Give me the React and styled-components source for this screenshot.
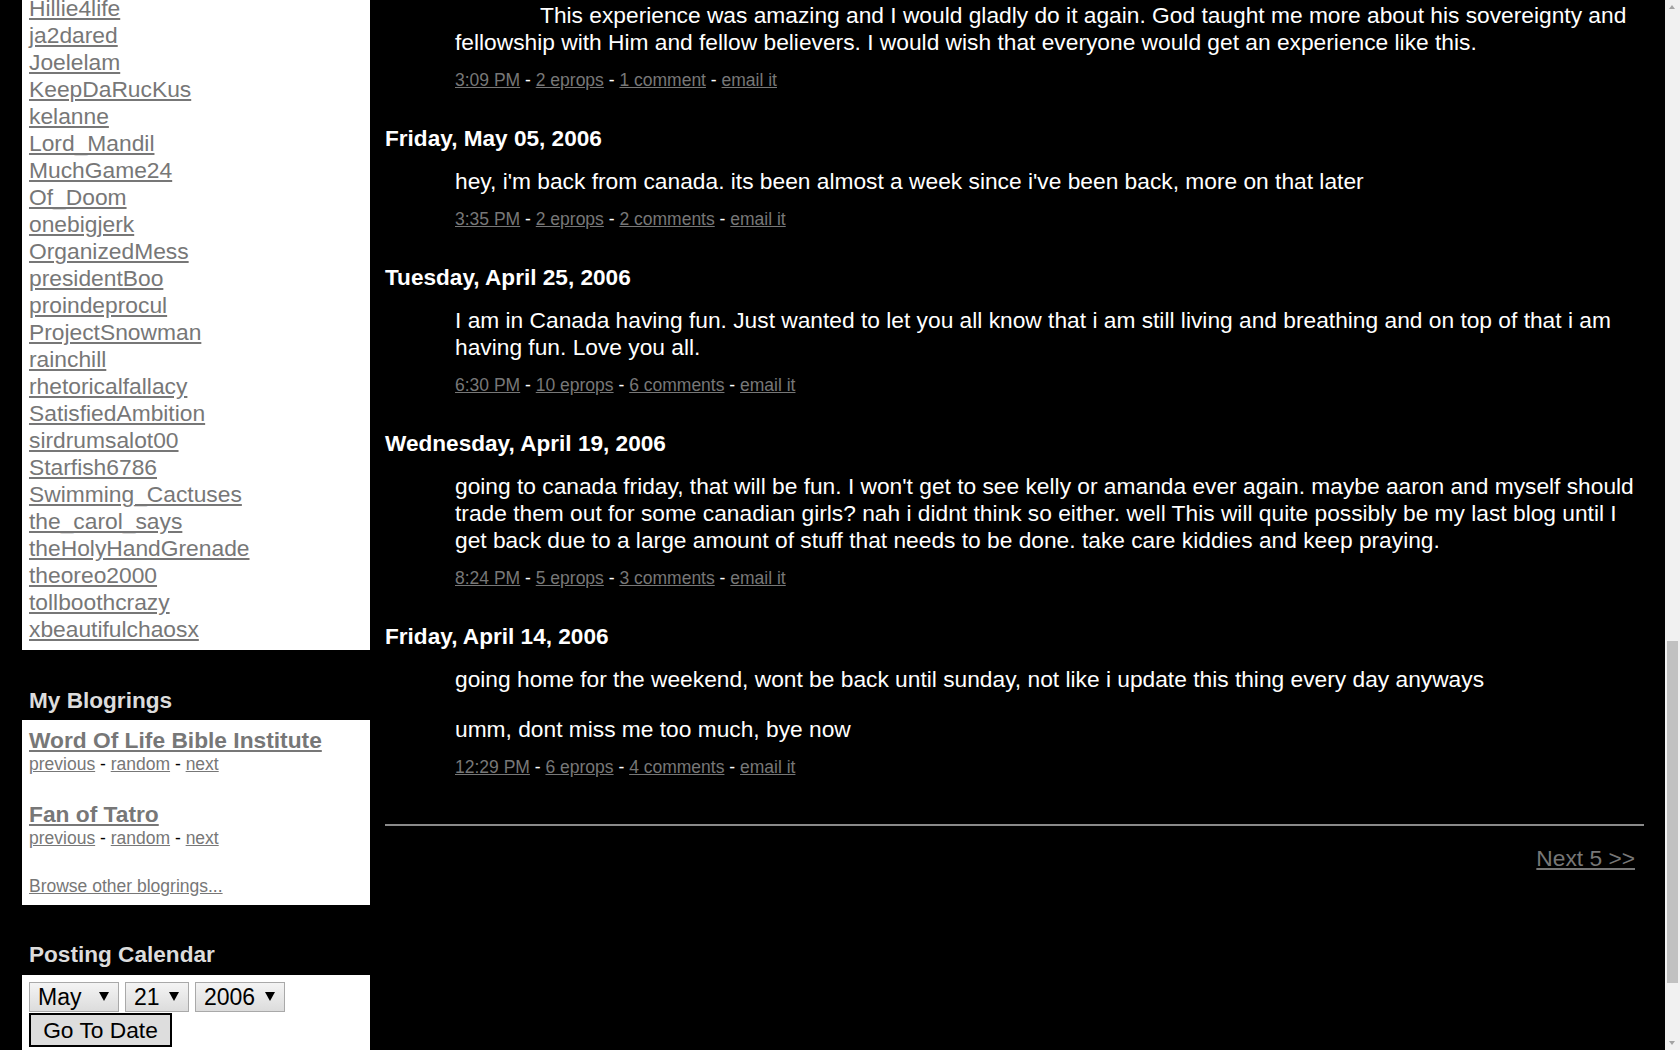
import React, { useLayoutEffect, useState } from "react";
import styled, { createGlobalStyle } from "styled-components";

// the screenshot shows the page scrolled down near its end
const SCROLL_TOP = 1922;
const BAR = 15;

const friends = [
  "Hillie4life", "ja2dared", "Joelelam", "KeepDaRucKus", "kelanne", "Lord_Mandil",
  "MuchGame24", "Of_Doom", "onebigjerk", "OrganizedMess", "presidentBoo", "proindeprocul",
  "ProjectSnowman", "rainchill", "rhetoricalfallacy", "SatisfiedAmbition", "sirdrumsalot00",
  "Starfish6786", "Swimming_Cactuses", "the_carol_says", "theHolyHandGrenade", "theoreo2000",
  "tollboothcrazy", "xbeautifulchaosx",
];

const blogrings = ["Word Of Life Bible Institute", "Fan of Tatro"];

const posts = [
  {
    date: null,
    indent: true,
    paragraphs: [
      "This experience was amazing and I would gladly do it again. God taught me more about his sovereignty and fellowship with Him and fellow believers. I would wish that everyone would get an experience like this.",
    ],
    time: "3:09 PM", eprops: "2 eprops", comments: "1 comment",
  },
  {
    date: "Friday, May 05, 2006",
    paragraphs: [
      "hey, i'm back from canada. its been almost a week since i've been back, more on that later",
    ],
    time: "3:35 PM", eprops: "2 eprops", comments: "2 comments",
  },
  {
    date: "Tuesday, April 25, 2006",
    paragraphs: [
      "I am in Canada having fun. Just wanted to let you all know that i am still living and breathing and on top of that i am having fun. Love you all.",
    ],
    time: "6:30 PM", eprops: "10 eprops", comments: "6 comments",
  },
  {
    date: "Wednesday, April 19, 2006",
    paragraphs: [
      "going to canada friday, that will be fun. I won't get to see kelly or amanda ever again. maybe aaron and myself should trade them out for some canadian girls? nah i didnt think so either. well This will quite possibly be my last blog until I get back due to a large amount of stuff that needs to be done. take care kiddies and keep praying.",
    ],
    time: "8:24 PM", eprops: "5 eprops", comments: "3 comments",
  },
  {
    date: "Friday, April 14, 2006",
    paragraphs: [
      "going home for the weekend, wont be back until sunday, not like i update this thing every day anyways",
      "umm, dont miss me too much, bye now",
    ],
    time: "12:29 PM", eprops: "6 eprops", comments: "4 comments",
  },
];

const months = ["January", "February", "March", "April", "May", "June", "July",
  "August", "September", "October", "November", "December"];
const days = Array.from({ length: 31 }, (_, i) => String(i + 1));
const years = ["2004", "2005", "2006"];

// classic scrollbar drawn over the right edge (the headless window hides its own)
const ScrollBar = ({ scrollTop }) => {
  const [thumb, setThumb] = useState({ top: 641, height: 342 });

  useLayoutEffect(() => {
    window.scrollTo(0, scrollTop);
    const total = document.documentElement.scrollHeight;
    const track = window.innerHeight - BAR * 2;
    setThumb({
      top: BAR + (window.scrollY / total) * track,
      height: (window.innerHeight / total) * track,
    });
  }, [scrollTop]);

  return (
    <Track>
      <Arrow $up />
      <Thumb style={{ top: thumb.top, height: thumb.height }} />
      <Arrow />
    </Track>
  );
};

const App = () => {
  return (
    <>
      <GlobalStyle />
      <Page>
        <Sidebar>
          <FriendsBox>
            <FriendList>
              {friends.map(name => (
                <li key={name}><Link href="#">{name}</Link></li>
              ))}
            </FriendList>
          </FriendsBox>

          <SideTitle>My Blogrings</SideTitle>
          <RingsBox>
            {blogrings.map(name => (
              <Ring key={name}>
                <RingName href="#">{name}</RingName>
                <SmallLine>
                  <Link href="#">previous</Link> - <Link href="#">random</Link> - <Link href="#">next</Link>
                </SmallLine>
              </Ring>
            ))}
            <SmallLine><Link href="#">Browse other blogrings...</Link></SmallLine>
          </RingsBox>

          <SideTitle>Posting Calendar</SideTitle>
          <CalendarBox>
            <SelectRow>
              <SelectWrap>
                <Select $w={90} defaultValue="May">
                  {months.map(m => <option key={m} value={m}>{m}</option>)}
                </Select>
              </SelectWrap>
              <SelectWrap>
                <Select $w={64} defaultValue="21">
                  {days.map(d => <option key={d} value={d}>{d}</option>)}
                </Select>
              </SelectWrap>
              <SelectWrap>
                <Select $w={90} defaultValue="2006">
                  {years.map(y => <option key={y} value={y}>{y}</option>)}
                </Select>
              </SelectWrap>
            </SelectRow>
            <GoButton type="button">Go To Date</GoButton>
          </CalendarBox>
        </Sidebar>

        <Main>
          {posts.map((post, i) => (
            <Post key={i}>
              {post.date && <DateTitle>{post.date}</DateTitle>}
              <PostBody>
                {post.paragraphs.map((text, j) => (
                  <Paragraph key={j} $indent={post.indent && j === 0}>{text}</Paragraph>
                ))}
                <Meta>
                  <Link href="#">{post.time}</Link> - <Link href="#">{post.eprops}</Link> - <Link href="#">{post.comments}</Link> - <Link href="#">email it</Link>
                </Meta>
              </PostBody>
            </Post>
          ))}
          <Rule />
          <Pager><Link href="#">Next 5 &gt;&gt;</Link></Pager>
        </Main>
      </Page>
      <ScrollBar scrollTop={SCROLL_TOP} />
    </>
  );
};


/**
 *  STYLES
 */
const GlobalStyle = createGlobalStyle`
  html {
    background: #000;
  }
  body {
    margin: 0;
    background: #000;
    color: #fff;
    font-family: Arial, "Liberation Sans", sans-serif;
    font-size: 22.75px;
    line-height: 27px;
  }
`;

const Page = styled.div`
  display: flex;
  align-items: flex-start;
  gap: 15px;
  padding: ${SCROLL_TOP - 40}px ${21 + BAR}px 0 22px;
`;

const Sidebar = styled.aside`
  flex: 0 0 348px;
  display: flex;
  flex-direction: column;
`;

const WhiteBox = styled.div`
  background: #fff;
  color: #000;
  padding: 0 7px;
  box-sizing: border-box;
`;

const FriendsBox = styled(WhiteBox)`
  padding-top: 34.5px;
  padding-bottom: 7.5px;
`;

const FriendList = styled.ul`
  list-style: none;
  margin: 0;
  padding: 0;
  line-height: 27px;
  font-size: 22.8px;
`;

const Link = styled.a`
  color: #777;
  text-decoration: underline;
`;

const SideTitle = styled.h3`
  margin: 36.5px 0 6.5px;
  padding-left: 7px;
  font-size: 22.6px;
  line-height: 27px;
  font-weight: bold;
  color: #dcdcdc;
`;

const RingsBox = styled(WhiteBox)`
  padding-top: 6.5px;
  padding-bottom: 9px;
`;

const Ring = styled.div`
  margin-bottom: 27.5px;
`;

const RingName = styled(Link)`
  display: inline-block;
  font-weight: bold;
  line-height: 27px;
`;

const SmallLine = styled.div`
  font-size: 17.5px;
  line-height: 20px;
`;

const CalendarBox = styled(WhiteBox)`
  padding-top: 7.5px;
  min-height: 235px;
`;

const SelectRow = styled.div`
  display: flex;
  gap: 6px;
  margin-bottom: 1px;
`;

const SelectWrap = styled.span`
  position: relative;
  display: inline-block;

  &::after {
    content: "";
    position: absolute;
    right: 10px;
    top: 50%;
    margin-top: -5px;
    border-left: 5px solid transparent;
    border-right: 5px solid transparent;
    border-top: 9px solid #000;
    pointer-events: none;
  }
`;

const Select = styled.select`
  appearance: none;
  -webkit-appearance: none;
  width: ${props => props.$w}px;
  height: 30px;
  margin: 0;
  padding: 0 24px 0 8px;
  border: 1px solid #a9a9a9;
  border-radius: 0;
  background: linear-gradient(#f4f4f4, #dcdcdc);
  color: #000;
  font-family: Arial, "Liberation Sans", sans-serif;
  font-size: 23px;
  line-height: 28px;
`;

const GoButton = styled.button`
  display: block;
  width: 143px;
  height: 34px;
  margin: 0;
  padding: 0;
  border: 2px solid #000;
  background: #dddddd;
  color: #000;
  font-family: Arial, "Liberation Sans", sans-serif;
  font-size: 22.75px;
`;

const Main = styled.main`
  flex: 1;
  min-width: 0;
  padding-top: 41.5px;
`;

const Post = styled.article`
  margin-bottom: 35px;
`;

const DateTitle = styled.h2`
  margin: 0 0 16px;
  font-size: 22.6px;
  line-height: 27px;
  font-weight: bold;
  color: #fff;
`;

const PostBody = styled.div`
  padding-left: 70px;
`;

const Paragraph = styled.p`
  margin: 0 0 23px;
  line-height: 27px;
  text-indent: ${props => (props.$indent ? "85px" : "0")};

  &:last-of-type {
    margin-bottom: 0;
  }
`;

const Meta = styled.div`
  margin-top: 14px;
  font-size: 17.5px;
  line-height: 20px;
  color: #fff;
`;

const Rule = styled.hr`
  margin: 47.5px 0 0;
  height: 2px;
  border: 0;
  background: #8a8a8a;
`;

const Pager = styled.div`
  margin-top: 18.5px;
  padding-right: 9px;
  text-align: right;
  line-height: 27px;
`;

const Track = styled.div`
  position: fixed;
  top: 0;
  right: 0;
  width: ${BAR}px;
  height: 100vh;
  background: #f1f1f1;
`;

const Thumb = styled.div`
  position: absolute;
  left: 2px;
  right: 2px;
  background: #c1c1c1;
`;

const Arrow = styled.div`
  position: absolute;
  left: 0;
  ${props => (props.$up ? "top: 0;" : "bottom: 0;")}
  width: ${BAR}px;
  height: ${BAR}px;

  &::after {
    content: "";
    position: absolute;
    left: 4px;
    top: ${props => (props.$up ? "5px" : "6px")};
    border-left: 3.5px solid transparent;
    border-right: 3.5px solid transparent;
    ${props => (props.$up ? "border-bottom" : "border-top")}: 4px solid #a3a3a3;
  }
`;

export default App;
